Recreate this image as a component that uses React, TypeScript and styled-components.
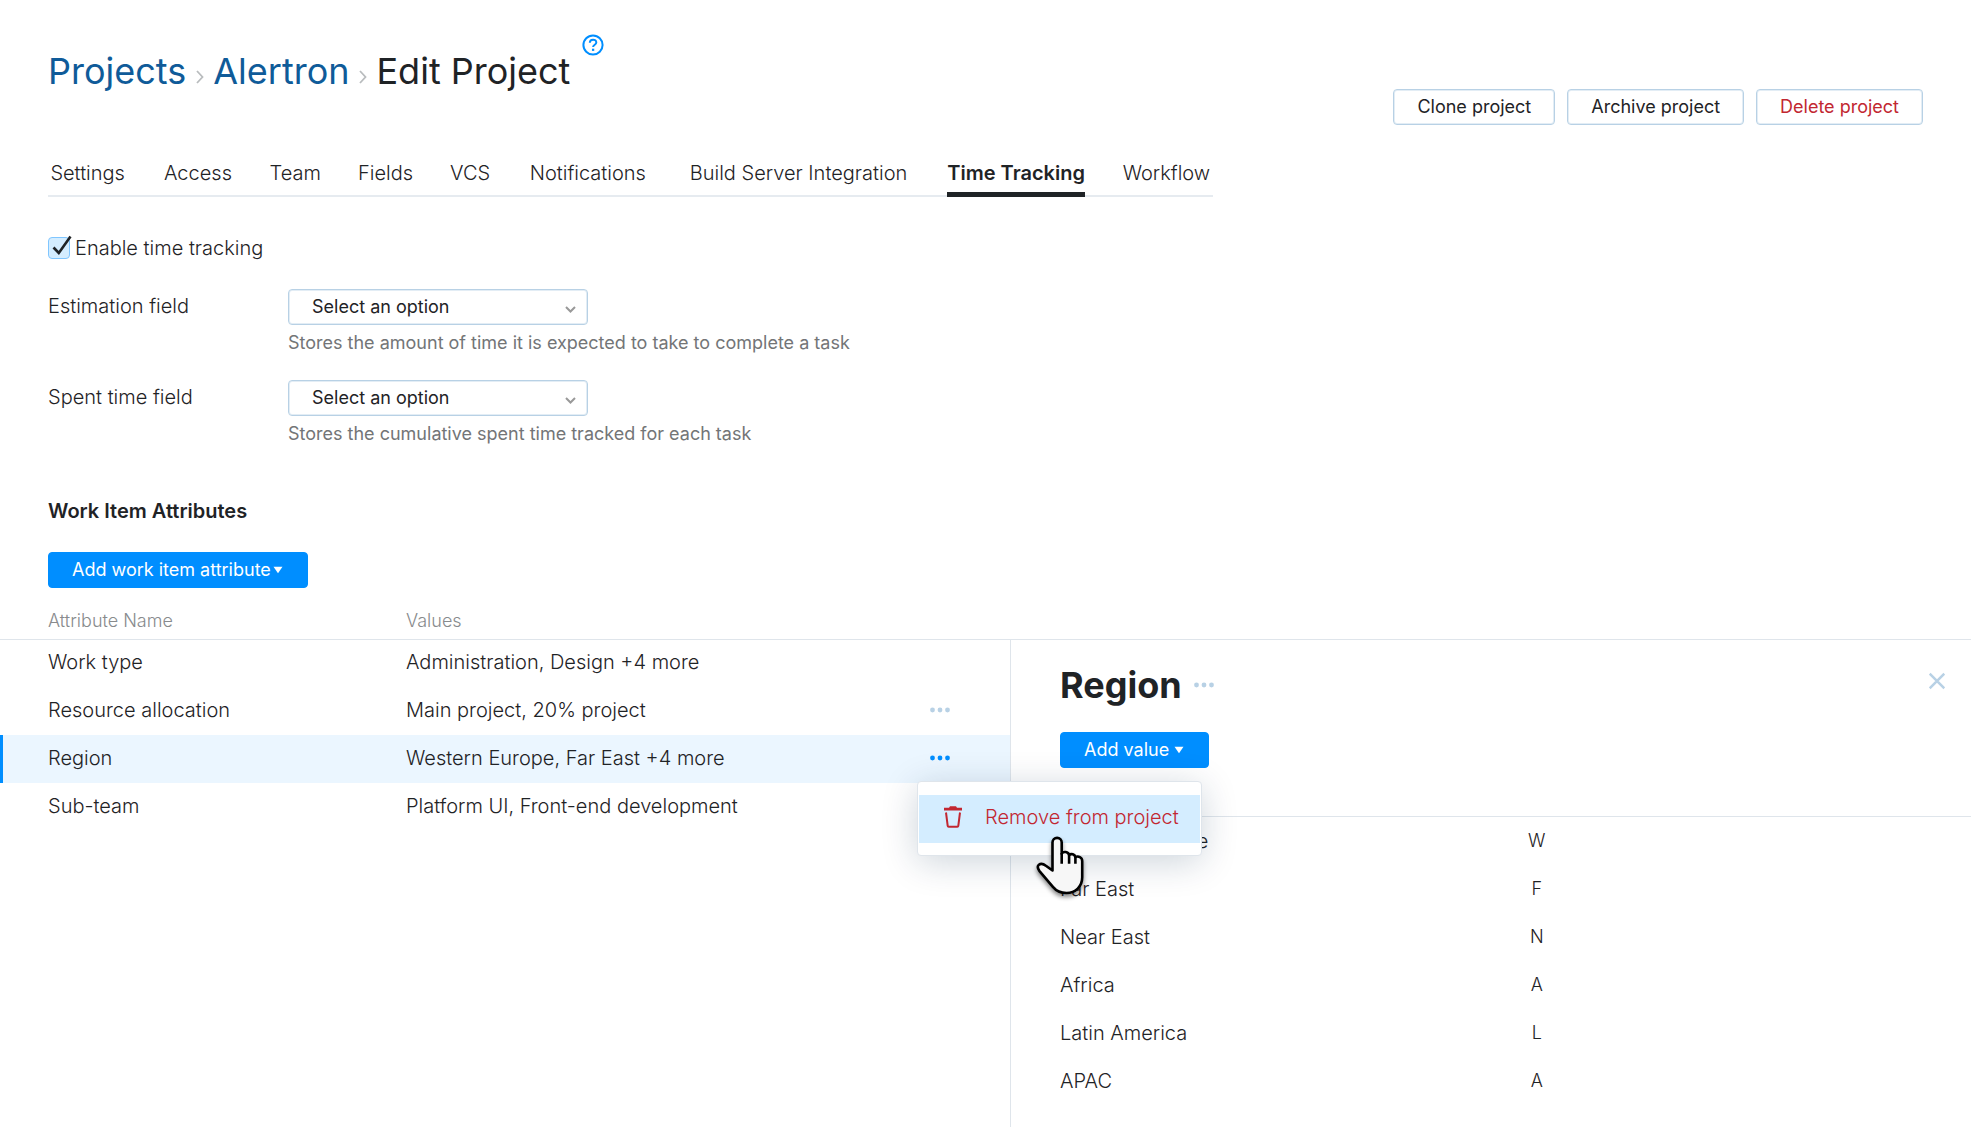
import React, { useState } from "react";
import styled, { createGlobalStyle, css } from "styled-components";

const color = {
  text: "#1f2326",
  link: "#0f5b99",
  secondary: "#737577",
  header: "#888b8d",
  border: "#b8d1e5",
  line: "#dfe5eb",
  main: "#008eff",
  selected: "#ebf6ff",
  hover: "#d4edff",
  error: "#c22731",
};

const GlobalStyle = createGlobalStyle`
  *, *::before, *::after { box-sizing: border-box; }
  body {
    margin: 0;
    background: #fff;
    color: ${color.text};
    font: 300 20px/24px Inter, "Liberation Sans", sans-serif;
  }
  button, select, input { font: inherit; color: inherit; margin: 0; }
`;

const Page = styled.div`
  min-height: 100vh;
  display: flex;
  flex-direction: column;
  overflow: hidden;
`;

const Content = styled.main`
  padding: 0 48px;
`;

const Header = styled.header`
  display: flex;
  justify-content: space-between;
  align-items: flex-start;
  padding: 47px 48px 0;
`;

const Breadcrumbs = styled.nav`
  display: flex;
  align-items: flex-start;
  font-size: 36px;
  font-weight: 400;
  line-height: 48px;
`;

const Crumb = styled.a`
  color: ${color.link};
  text-decoration: none;
`;

const Separator = styled.svg`
  width: 8px;
  height: 14px;
  margin: 23px 9px 0 10px;
`;

const Title = styled.h1`
  margin: 0;
  font: inherit;
`;

const IconButton = styled.button`
  display: inline-flex;
  padding: 0;
  border: 0;
  background: none;
  cursor: pointer;
`;

const HelpButton = styled(IconButton)`
  margin: -13px 0 0 12px;
`;

const Actions = styled.div`
  display: flex;
  gap: 12px;
  padding-top: 42px;
`;

const Button = styled.button<{ $danger?: boolean; $primary?: boolean }>`
  display: inline-flex;
  align-items: center;
  height: 36px;
  padding: 0 23px;
  border: 1px solid ${color.border};
  border-radius: 4px;
  box-shadow: inset 0 0 0 1px #e3edf5;
  background: #fff;
  color: ${(p) => (p.$danger ? color.error : color.text)};
  font-size: 18px;
  font-weight: 400;
  line-height: 24px;
  white-space: nowrap;
  cursor: pointer;
  ${(p) =>
    p.$primary &&
    css`
      border-color: ${color.main};
      box-shadow: none;
      background: ${color.main};
      color: #fff;
    `}
`;

const Tabs = styled.nav`
  display: flex;
  gap: 35px;
  width: fit-content;
  margin-top: 36px;
  border-bottom: 2px solid #e6ebf0;
`;

const Tab = styled.a<{ $active?: boolean }>`
  display: grid;
  justify-items: center;
  margin-bottom: -2px;
  padding-bottom: 7px;
  border-bottom: 5px solid ${(p) => (p.$active ? color.text : "transparent")};
  color: ${color.text};
  font-weight: ${(p) => (p.$active ? 600 : 300)};
  text-decoration: none;
  white-space: nowrap;

  &::after {
    content: attr(title);
    height: 0;
    overflow: hidden;
    visibility: hidden;
    font-weight: 600;
  }
`;

const CheckRow = styled.label`
  display: flex;
  align-items: center;
  gap: 5px;
  width: fit-content;
  margin-top: 39px;
`;

const CheckBox = styled.span`
  position: relative;
  display: flex;

  input {
    appearance: none;
    width: 22px;
    height: 22px;
    border: 1px solid #80c6ff;
    border-radius: 4px;
    background: ${color.hover};
  }
  input:not(:checked) + svg {
    display: none;
  }
  svg {
    position: absolute;
    left: 4px;
    bottom: 3px;
    pointer-events: none;
  }
`;

const Fields = styled.div`
  display: grid;
  gap: 25px;
  margin-top: 29px;
`;

const Field = styled.div`
  display: grid;
  grid-template-columns: 240px 1fr;
`;

const FieldLabel = styled.label`
  padding-top: 5px;
`;

const SelectBox = styled.div`
  position: relative;
  width: 300px;

  select {
    display: block;
    appearance: none;
    width: 100%;
    height: 36px;
    padding: 0 36px 0 23px;
    border: 1px solid ${color.border};
    border-radius: 4px;
    box-shadow: inset 0 0 0 1px #e3edf5;
    background: #fff;
    font-size: 18px;
    font-weight: 400;
    line-height: 24px;
  }
  svg {
    position: absolute;
    right: 12px;
    top: 16px;
    pointer-events: none;
  }
`;

const Hint = styled.p`
  margin: 6px 0 0;
  color: ${color.secondary};
  font-size: 18px;
  font-weight: 400;
`;

const Heading = styled.h2`
  margin: 53px 0 29px;
  font-size: 20px;
  font-weight: 600;
`;

const Caret = styled.svg<{ $gap: number }>`
  width: 12px;
  height: 8px;
  margin-left: ${(p) => p.$gap}px;
`;

const Split = styled.div`
  flex: 1;
  display: grid;
  grid-template-columns: 1010fr 961fr;
  margin-top: 11px;
`;

const AttributeTable = styled.table`
  width: 100%;
  align-self: start;
  border-collapse: separate;
  border-spacing: 0;
  table-layout: fixed;

  th {
    height: 41px;
    padding: 3px 0 0;
    border-bottom: 1px solid ${color.line};
    color: ${color.header};
    font-size: 18px;
    font-weight: 300;
    text-align: left;
  }
  td {
    height: 48px;
    padding: 11px 0 0;
    vertical-align: top;
  }
  th:first-child,
  td:first-child {
    width: 406px;
    padding-left: 48px;
  }
  th:last-child,
  td:last-child {
    width: 80px;
  }
  tbody tr:first-child td {
    height: 47px;
    padding-top: 10px;
  }
`;

const AttributeRow = styled.tr<{ $selected?: boolean }>`
  ${(p) =>
    p.$selected &&
    css`
      background: ${color.selected};
      td:first-child {
        box-shadow: inset 3px 0 0 ${color.main};
      }
    `}
`;

const ActionCell = styled.div`
  position: relative;
  display: flex;
  align-items: center;
  height: 24px;
`;

const Menu = styled.div`
  position: absolute;
  z-index: 2;
  top: 35px;
  left: -13px;
  width: 285px;
  padding: 13px 1px 12px;
  border: 1px solid ${color.line};
  border-radius: 4px;
  background: #fff;
  box-shadow: 0 6px 36px rgba(0, 42, 76, 0.2);
`;

const MenuItem = styled.button`
  display: flex;
  align-items: center;
  gap: 23px;
  width: 100%;
  height: 48px;
  padding: 0 24px 4px 25px;
  border: 0;
  background: ${color.hover};
  color: ${color.error};
  white-space: nowrap;
  cursor: pointer;

  svg {
    flex-shrink: 0;
  }
`;

const Pointer = styled.svg`
  position: absolute;
  z-index: 3;
  top: 54px;
  left: 118px;
  overflow: visible;
  pointer-events: none;
  filter: drop-shadow(0 3px 2px rgba(0, 0, 0, 0.45));
`;

const Panel = styled.aside`
  margin-top: 40px;
  border-top: 1px solid ${color.line};
  border-left: 1px solid ${color.line};
`;

const PanelHead = styled.div`
  display: flex;
  justify-content: space-between;
  padding: 21px 26px 0 49px;
`;

const PanelTitle = styled.div`
  display: flex;
  align-items: center;
  gap: 12px;

  h2 {
    margin: 0;
    font-size: 36px;
    font-weight: 700;
    line-height: 48px;
  }
`;

const PanelTools = styled.div`
  padding: 23px 49px 48px;
`;

const ValueTable = styled.table`
  width: 100%;
  border-collapse: separate;
  border-spacing: 0;
  border-top: 1px solid ${color.line};
  table-layout: fixed;

  td {
    height: 48px;
    padding: 0;
  }
  td:first-child {
    width: 53%;
    padding-left: 49px;
  }
  td:last-child {
    font-size: 18px;
  }
`;

const Code = styled.span`
  display: inline-block;
  width: 34px;
  text-align: center;
`;

const Dots = ({ fill }: { fill: string }) => (
  <svg width="20" height="6" viewBox="0 0 20 6" fill={fill}>
    <circle cx="2.5" cy="3" r="2.4" />
    <circle cx="10" cy="3" r="2.4" />
    <circle cx="17.5" cy="3" r="2.4" />
  </svg>
);

const Chevron = () => (
  <svg width="11" height="9" viewBox="0 0 11 9" fill="none" stroke="#999" strokeWidth="2">
    <path d="M1 2l4.5 4.5L10 2" />
  </svg>
);

const Arrow = () => (
  <Separator viewBox="0 0 8 14" fill="none" stroke="#b9bcbe" strokeWidth="1.8">
    <path d="M1 1l5.5 6L1 13" />
  </Separator>
);

const Down = ({ gap }: { gap: number }) => (
  <Caret $gap={gap} viewBox="0 0 12 8" fill="#fff" aria-hidden="true">
    <path d="M1.500 .7h9L6 7.300z" />
  </Caret>
);

const Trash = () => (
  <svg width="18" height="22" viewBox="0 0 18 22" fill="none">
    <path d="M0 1.700H5L6 .3h6l1 1.400H18v2.900H0z" fill={color.error} />
    <path d="M2 6.500l1.700 13.300q.1.900 1 .9h8.600q.9 0 1-.9L16 6.500" stroke={color.error} strokeWidth="2" />
  </svg>
);

const HandPointer = () => (
  <Pointer width="48" height="60" viewBox="0 0 48 60" aria-hidden="true">
    <path
      d="M16.500 34.500V6.500a4.600 4.600 0 0 1 9.200 0v11.200c1.700-2.800 6.600-2 7.400 1.200 2.200-1.700 5.600-.5 6.300 2.100 2.900-1.400 6.800.2 6.800 4v16.300C46.200 50.500 39.500 57 30.500 57c-6 0-10.300-2.200-13.600-6.200L3.300 34.800c-1.800-2.600-2-4.700-.4-6 1.500-1.300 4.400-1.100 7 .9z"
      fill="#f7f7f7"
      stroke="#000"
      strokeWidth="2.600"
      strokeLinejoin="round"
    />
    <path d="M25.700 17v10.800M33.100 18.500v9.300M39.400 20.500v7.300" stroke="#000" strokeWidth="2.600" fill="none" />
  </Pointer>
);

const tabs = [
  "Settings",
  "Access",
  "Team",
  "Fields",
  "VCS",
  "Notifications",
  "Build Server Integration",
  "Time Tracking",
  "Workflow",
];

const fields = [
  {
    id: "estimation",
    label: "Estimation field",
    hint: "Stores the amount of time it is expected to take to complete a task",
  },
  {
    id: "spent",
    label: "Spent time field",
    hint: "Stores the cumulative spent time tracked for each task",
  },
];

const attributes = [
  { name: "Work type", values: "Administration, Design +4 more" },
  { name: "Resource allocation", values: "Main project, 20% project", menu: true },
  { name: "Region", values: "Western Europe, Far East +4 more", menu: true, selected: true },
  { name: "Sub-team", values: "Platform UI, Front-end development" },
];

const regions = [
  ["Western Europe", "W"],
  ["Far East", "F"],
  ["Near East", "N"],
  ["Africa", "A"],
  ["Latin America", "L"],
  ["APAC", "A"],
];

export default function App() {
  const [enabled, setEnabled] = useState(true);

  return (
    <Page>
      <GlobalStyle />
      <Header>
        <Breadcrumbs>
          <Crumb href="#projects">Projects</Crumb>
          <Arrow />
          <Crumb href="#alertron">Alertron</Crumb>
          <Arrow />
          <Title>Edit Project</Title>
          <HelpButton aria-label="Help">
            <svg width="22" height="22" viewBox="0 0 22 22" fill="none" stroke={color.main} strokeWidth="2">
              <circle cx="11" cy="11" r="9.600" />
              <path d="M7.800 8.800c0-4.200 6.500-4.100 6.500-.4 0 2.300-3.200 2.300-3.200 4.700" />
              <path d="M11.100 14.700v2.200" strokeWidth="2.300" />
            </svg>
          </HelpButton>
        </Breadcrumbs>
        <Actions>
          <Button>Clone project</Button>
          <Button>Archive project</Button>
          <Button $danger>Delete project</Button>
        </Actions>
      </Header>

      <Content>
        <Tabs>
          {tabs.map((tab) => (
            <Tab key={tab} href="#tab" title={tab} $active={tab === "Time Tracking"}>
              {tab}
            </Tab>
          ))}
        </Tabs>

        <CheckRow>
          <CheckBox>
            <input type="checkbox" checked={enabled} onChange={(e) => setEnabled(e.target.checked)} />
            <svg width="20" height="21" viewBox="0 0 20 21" fill="none" stroke={color.text} strokeWidth="2.600">
              <path d="M1.500 12.500l5.300 5.500L18.500 1.500" />
            </svg>
          </CheckBox>
          Enable time tracking
        </CheckRow>

        <Fields>
          {fields.map((field) => (
            <Field key={field.id}>
              <FieldLabel htmlFor={field.id}>{field.label}</FieldLabel>
              <div>
                <SelectBox>
                  <select id={field.id}>
                    <option>Select an option</option>
                  </select>
                  <Chevron />
                </SelectBox>
                <Hint>{field.hint}</Hint>
              </div>
            </Field>
          ))}
        </Fields>

        <Heading>Work Item Attributes</Heading>
        <Button $primary>
          Add work item attribute
          <Down gap={1} />
        </Button>
      </Content>

      <Split>
        <AttributeTable>
          <thead>
            <tr>
              <th>Attribute Name</th>
              <th>Values</th>
              <th aria-label="Actions" />
            </tr>
          </thead>
          <tbody>
            {attributes.map((row) => (
              <AttributeRow key={row.name} $selected={row.selected}>
                <td>{row.name}</td>
                <td>{row.values}</td>
                <td>
                  {row.menu && (
                    <ActionCell>
                      <IconButton aria-label="More actions">
                        <Dots fill={row.selected ? color.main : color.border} />
                      </IconButton>
                      {row.selected && (
                        <Menu>
                          <MenuItem>
                            <Trash />
                            Remove from project
                          </MenuItem>
                          <HandPointer />
                        </Menu>
                      )}
                    </ActionCell>
                  )}
                </td>
              </AttributeRow>
            ))}
          </tbody>
        </AttributeTable>

        <Panel>
          <PanelHead>
            <PanelTitle>
              <h2>Region</h2>
              <IconButton aria-label="More actions">
                <Dots fill={color.border} />
              </IconButton>
            </PanelTitle>
            <IconButton aria-label="Close">
              <svg width="16" height="41" viewBox="0 0 16 41" stroke={color.border} strokeWidth="2.400">
                <path d="M.7 12.700l14.600 14.600M15.300 12.700L.7 27.300" />
              </svg>
            </IconButton>
          </PanelHead>
          <PanelTools>
            <Button $primary>
              Add value
              <Down gap={4} />
            </Button>
          </PanelTools>
          <ValueTable>
            <tbody>
              {regions.map(([name, code]) => (
                <tr key={name}>
                  <td>{name}</td>
                  <td>
                    <Code>{code}</Code>
                  </td>
                </tr>
              ))}
            </tbody>
          </ValueTable>
        </Panel>
      </Split>
    </Page>
  );
}
